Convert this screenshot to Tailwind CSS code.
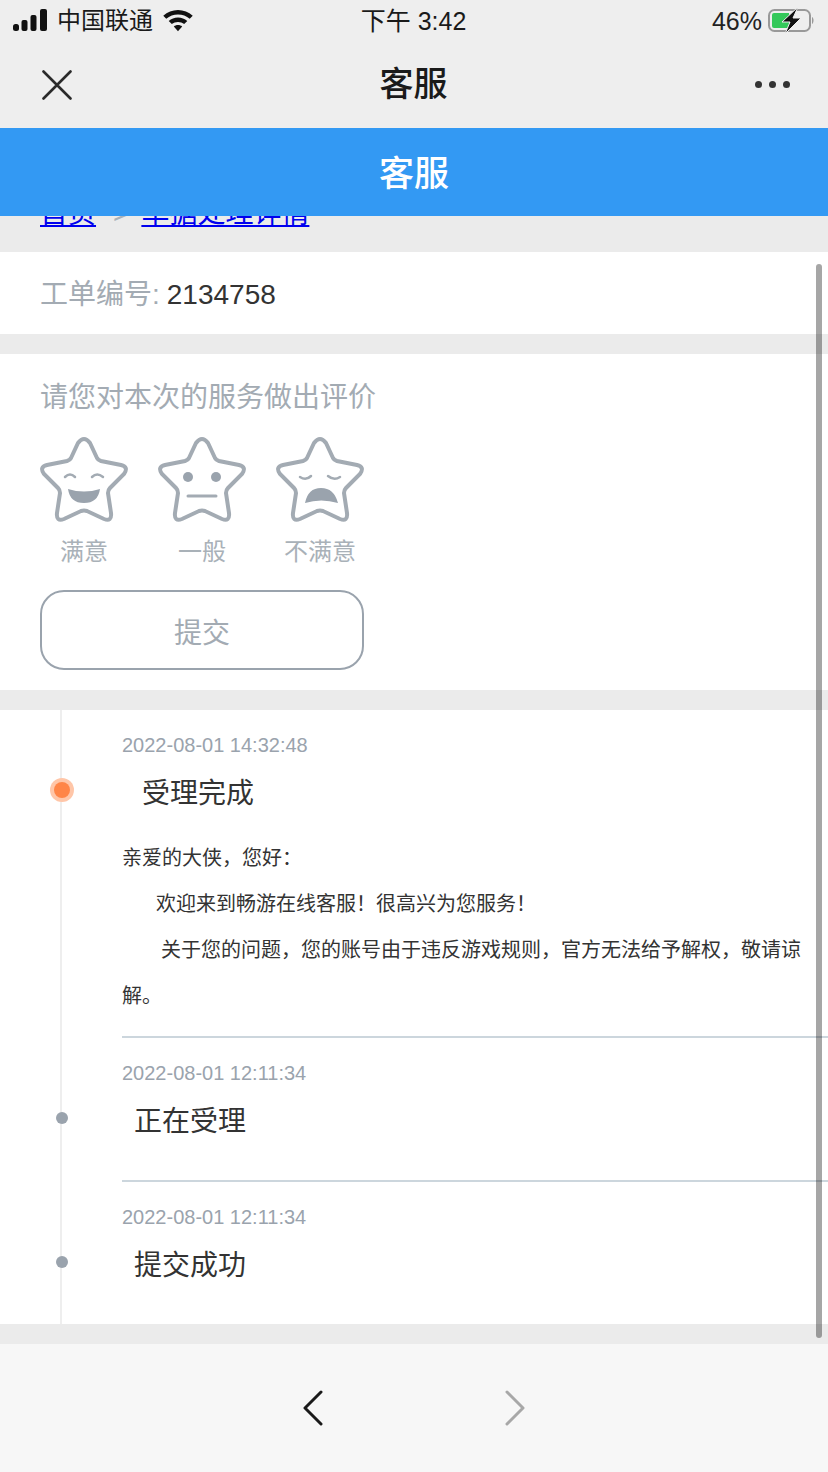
<!DOCTYPE html>
<html lang="zh">
  <head>
    <meta charset="UTF-8" />
    <title>客服</title>
    <script src="https://cdn.jsdelivr.net/npm/@tailwindcss/browser@4"></script>
  </head>
  <body class="relative w-[828px] h-[1472px] overflow-hidden flex flex-col bg-white font-['Liberation_Sans','Noto_Sans_CJK_SC',sans-serif]">
    <!-- wechat header -->
    <header class="h-[128px] shrink-0 bg-[#eeeeee] text-[#1a1a1a]">
      <div class="h-[42px] flex items-center justify-between pl-[13px] pr-[12px]">
        <div class="w-[280px] flex items-center">
          <svg width="35" height="24" viewBox="0 0 35 24" fill="#111"><rect x="0" y="15" width="6" height="7" rx="2.500"/><rect x="8.500" y="11" width="6" height="11" rx="2"/><rect x="17.500" y="6" width="6" height="16" rx="2"/><rect x="27" y="0" width="7" height="22" rx="2"/></svg>
          <span class="ml-[9px] text-[24px] leading-none">中国联通</span>
          <svg class="ml-[10px]" width="30" height="22" viewBox="1 1 28 20.600" fill="#111"><path d="M15 1c5.200 0 10 2 13.800 5.300l-2.800 3C22.900 6.700 19.100 5.300 15 5.300S7.100 6.700 4 9.300l-2.800-3C5 3 9.800 1 15 1z"/><path d="M15 8c3.300 0 6.300 1.200 8.700 3.200l-2.900 3C19.200 13 17.200 12.300 15 12.300s-4.200.7-5.800 1.900l-2.900-3C8.700 9.200 11.700 8 15 8z"/><path d="M15 15c1.500 0 2.900.5 3.900 1.400L15 21l-3.900-4.600c1-.9 2.400-1.400 3.900-1.400z"/></svg>
        </div>
        <span class="-ml-[2px] text-[25px] leading-none">下午 3:42</span>
        <div class="w-[280px] flex items-center justify-end">
          <span class="text-[25px] leading-none text-[#222]">46%</span>
          <svg class="ml-[6px] mr-[1px]" width="47" height="26" viewBox="0 0 47 26">
            <rect x="1" y="2" width="41" height="21" rx="5.500" fill="none" stroke="#999" stroke-width="2"/>
            <path d="M4 7a2 2 0 0 1 2-2h15v15H6a2 2 0 0 1-2-2z" fill="#34c85a"/>
            <path d="M44 9c2 .5 2 6 0 7z" fill="#999"/>
            <path d="M30 -1L14 14h8l-5 12 16-16h-8z" fill="#111" stroke="#eee" stroke-width="1"/>
          </svg>
        </div>
      </div>
      <div class="relative h-[86px] flex items-center justify-between pl-[42px] pr-[38px]">
        <svg width="30" height="30" viewBox="0 0 30 30" stroke="#2a2a2a" stroke-width="2.600" stroke-linecap="round"><path d="M1.500 1.500l27 27M28.500 1.500l-27 27"/></svg>
        <h1 class="text-[34px] font-medium leading-none -mt-[2px]">客服</h1>
        <div class="flex gap-[7px] -mt-[2px]">
          <span class="w-[7px] h-[7px] rounded-full bg-[#333]"></span>
          <span class="w-[7px] h-[7px] rounded-full bg-[#333]"></span>
          <span class="w-[7px] h-[7px] rounded-full bg-[#333]"></span>
        </div>
      </div>
    </header>

    <div class="h-[88px] shrink-0 flex items-center justify-center pt-[5px] bg-[#3399f3] text-white text-[35px] font-medium">客服</div>

    <main class="flex-1 flex flex-col bg-[#ebebeb] overflow-hidden">
      <!-- breadcrumb, scrolled under the blue bar -->
      <nav class="h-[36px] shrink-0 overflow-hidden pl-[40px] flex items-start text-[28px] leading-[28px]">
        <div class="-mt-[16px] flex">
          <a class="underline text-[#0000ee]">首页</a>
          <span class="mx-[17px] text-[#a9b1b8]">&gt;</span>
          <a class="underline text-[#0000ee] -ml-[5px]">单据处理详情</a>
        </div>
      </nav>

      <section class="h-[82px] shrink-0 bg-white pl-[40px] pt-[4px] flex items-center text-[28px] text-[#a3abb3]">
        工单编号:<span class="ml-[7px] text-[#333]">2134758</span>
      </section>

      <section class="mt-[20px] h-[336px] shrink-0 bg-white px-[40px] pt-[26px]">
        <p class="text-[28px] leading-[36px] text-[#a3abb3]">请您对本次的服务做出评价</p>
        <div class="mt-[20px] flex gap-[30px]">
          <div class="w-[88px] flex flex-col items-center">
            <svg class="overflow-visible" width="88" height="88" viewBox="0 0 88 88" fill="none" stroke="#a3abb3" stroke-width="4">
              <path d="M38 7Q44 -1 50 7L57 22Q58 24 61 25L81 29Q89 31 84 38L70 52Q68 54 68 57L71 77Q72 86 64 83L47 75Q44 74 41 75L24 83Q16 86 17 77L20 57Q20 54 18 52L4 38Q-1 31 7 29L27 25Q30 24 31 22Z"/>
              <path d="M25 41q5-5 10 0M52 41q5-5 11 0" stroke-width="2.500" stroke-linecap="round"/>
              <path d="M28 53q16 5 32 0q-2 14-16 14t-16-14z" fill="#9aa3ad" stroke="none"/>
            </svg>
            <span class="mt-[13px] text-[24px] leading-[30px] text-[#a9b1b8]">满意</span>
          </div>
          <div class="w-[88px] flex flex-col items-center">
            <svg class="overflow-visible" width="88" height="88" viewBox="0 0 88 88" fill="none" stroke="#a3abb3" stroke-width="4">
              <path d="M38 7Q44 -1 50 7L57 22Q58 24 61 25L81 29Q89 31 84 38L70 52Q68 54 68 57L71 77Q72 86 64 83L47 75Q44 74 41 75L24 83Q16 86 17 77L20 57Q20 54 18 52L4 38Q-1 31 7 29L27 25Q30 24 31 22Z"/>
              <circle cx="30" cy="41" r="5" fill="#9aa3ad" stroke="none"/>
              <circle cx="58" cy="41" r="5" fill="#9aa3ad" stroke="none"/>
              <path d="M30 60h28" stroke-width="3" stroke-linecap="round"/>
            </svg>
            <span class="mt-[13px] text-[24px] leading-[30px] text-[#a9b1b8]">一般</span>
          </div>
          <div class="w-[88px] flex flex-col items-center">
            <svg class="overflow-visible" width="88" height="88" viewBox="0 0 88 88" fill="none" stroke="#a3abb3" stroke-width="4">
              <path d="M38 7Q44 -1 50 7L57 22Q58 24 61 25L81 29Q89 31 84 38L70 52Q68 54 68 57L71 77Q72 86 64 83L47 75Q44 74 41 75L24 83Q16 86 17 77L20 57Q20 54 18 52L4 38Q-1 31 7 29L27 25Q30 24 31 22Z"/>
              <path d="M24 41q6 4 11-1M52 40q6 5 12 1" stroke-width="2.500" stroke-linecap="round"/>
              <path d="M29 67q3-15 16-15t17 15q-17-5-33 0z" fill="#9aa3ad" stroke="none"/>
            </svg>
            <span class="mt-[13px] text-[24px] leading-[30px] text-[#a9b1b8]">不满意</span>
          </div>
        </div>
        <button class="mt-[23px] w-[324px] h-[80px] pt-[7px] rounded-[24px] border-2 border-[#9aa3ad] text-[28px] text-[#a3abb3]">提交</button>
      </section>

      <!-- progress timeline -->
      <section class="relative mt-[20px] h-[614px] shrink-0 bg-white pl-[122px] text-[#333]">
        <span class="absolute left-[60px] top-0 bottom-0 w-[2px] bg-[#eeeeee]"></span>
        <span class="absolute left-[50px] top-[68px] w-[24px] h-[24px] rounded-full bg-[#ffc6a8]"></span>
        <span class="absolute left-[54px] top-[72px] w-[16px] h-[16px] rounded-full bg-[#ff8547]"></span>
        <span class="absolute left-[56px] top-[402px] w-[12px] h-[12px] rounded-full bg-[#9aa3ad]"></span>
        <span class="absolute left-[56px] top-[546px] w-[12px] h-[12px] rounded-full bg-[#9aa3ad]"></span>

        <div class="h-[328px] border-b-2 border-[#ccd6dd] pt-[24px]">
          <p class="text-[20px] leading-[22px] text-[#9aa3ad]">2022-08-01 14:32:48</p>
          <p class="mt-[18px] pl-[20px] text-[28px] leading-[40px]">受理完成</p>
          <div class="mt-[21px] pr-[22px] text-[20px] leading-[46px] text-[#333]">
            <p>亲爱的大侠，您好：</p>
            <p class="indent-[34px]">欢迎来到畅游在线客服！很高兴为您服务！</p>
            <p class="indent-[39px]">关于您的问题，您的账号由于违反游戏规则，官方无法给予解权，敬请谅解。</p>
          </div>
        </div>
        <div class="h-[144px] border-b-2 border-[#ccd6dd] pt-[24px]">
          <p class="text-[20px] leading-[22px] text-[#9aa3ad]">2022-08-01 12:11:34</p>
          <p class="mt-[18px] pl-[12px] text-[28px] leading-[40px]">正在受理</p>
        </div>
        <div class="pt-[24px]">
          <p class="text-[20px] leading-[22px] text-[#9aa3ad]">2022-08-01 12:11:34</p>
          <p class="mt-[18px] pl-[12px] text-[28px] leading-[40px]">提交成功</p>
        </div>
      </section>
    </main>

    <footer class="h-[128px] shrink-0 bg-[#f7f7f7] flex items-center justify-center gap-[182px]">
      <svg width="20" height="36" viewBox="0 0 20 36" fill="none" stroke="#1a1a1a" stroke-width="3" stroke-linecap="round" stroke-linejoin="round"><path d="M18 2L2 18l16 16"/></svg>
      <svg width="20" height="36" viewBox="0 0 20 36" fill="none" stroke="#a8a8a8" stroke-width="3" stroke-linecap="round" stroke-linejoin="round"><path d="M2 2l16 16L2 34"/></svg>
    </footer>

    <!-- overlay scrollbar -->
    <div class="absolute left-[816px] top-[264px] w-[6px] h-[1074px] rounded-full bg-black/35"></div>
  </body>
</html>
